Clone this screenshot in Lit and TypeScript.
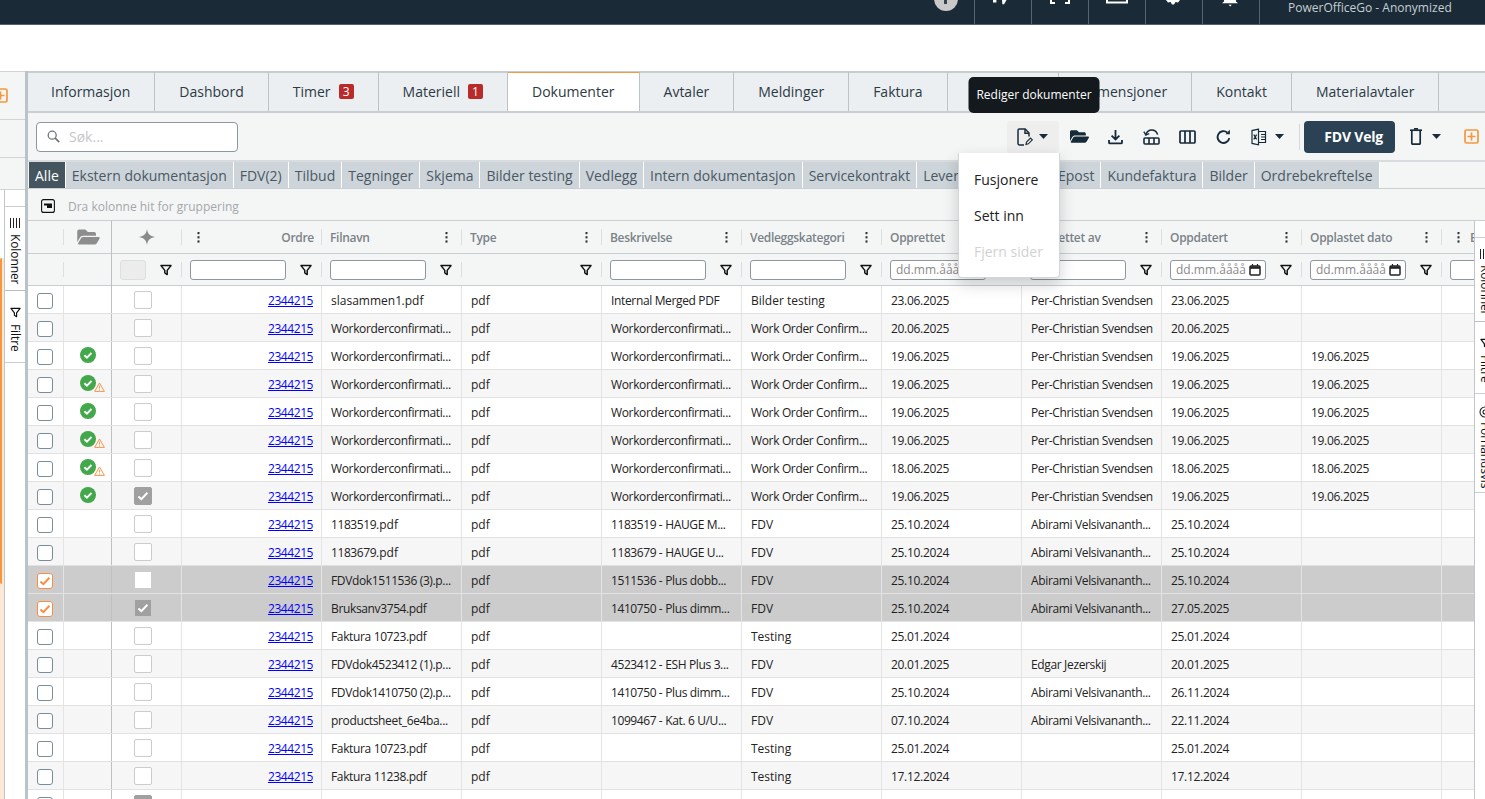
import { LitElement, html, css, svg, nothing } from "lit";
import { customElement } from "lit/decorators.js";
import { classMap } from "lit/directives/class-map.js";

const FOLDER = "M572.694 292.093L500.27 416.248A63.997 63.997 0 0 1 444.989 448H45.025c-18.523 0-30.064-20.093-20.731-36.093l72.424-124.155A64 64 0 0 1 152 256h399.964c18.523 0 30.064 20.093 20.73 36.093zM152 224h328v-48c0-26.51-21.49-48-48-48H272l-64-64H48C21.49 64 0 85.49 0 112v278.046l69.077-118.418C86.214 242.25 117.989 224 152 224z";

const funnel = html`<svg class="funnel" width="12" height="12" viewBox="0 0 12 12" fill="none" stroke="#111" stroke-width="1.5" stroke-linejoin="round"><path d="M1 1.6h10L7.2 6.4v4.2L4.8 9V6.4z"/></svg>`;
const dots = html`<svg class="dots" width="3" height="11" viewBox="0 0 3 11" fill="#333"><rect x=".5" y="0" width="2" height="2.2"/><rect x=".5" y="4.2" width="2" height="2.2"/><rect x=".5" y="8.4" width="2" height="2.2"/></svg>`;
const caret = html`<svg class="caret" width="9" height="5" viewBox="0 0 9 5" fill="#1b2c38"><path d="M0 0h9L4.500 5z"/></svg>`;
const plusBox = html`<svg width="15" height="15" viewBox="0 0 15 15" fill="none" stroke="#f7963e" stroke-width="1.700"><rect x="1" y="1" width="13" height="13" rx="1.500"/><path d="M7.500 3.500v8M3.500 7.500h8"/></svg>`;
const okIcon = html`<svg width="16" height="16" viewBox="0 0 16 16"><circle cx="8" cy="8" r="8" fill="#43a74b"/><path d="M4.400 8.200l2.500 2.400 4.600-4.600" fill="none" stroke="#fff" stroke-width="1.900"/></svg>`;
const warnIcon = html`<svg class="warn" width="11" height="10" viewBox="0 0 11 10" fill="none" stroke="#f7954a" stroke-width="1"><path d="M5.500 1L10.400 9.400H.6z" stroke-linejoin="round"/><path d="M5.500 3.600v3M5.500 7.500v1" stroke-width=".9"/></svg>`;
const tick = (c: string) => html`<svg width="12" height="10" viewBox="0 0 12 10" fill="none" stroke="${c}" stroke-width="2"><path d="M1.400 5.400l3 2.800 6-6.400"/></svg>`;
const calendar = html`<svg class="cal" width="12" height="12" viewBox="0 0 12 12" fill="none" stroke="#222" stroke-width="1.500"><rect x="1" y="2" width="10" height="9" rx="1"/><path d="M1 3.600h10" stroke-width="2.400"/><path d="M3.500 0v2M8.500 0v2" stroke-width="1.200"/></svg>`;

const topIcons = [
  svg`<path d="M1 0v2.600h3.400V0M10 0h4.500l-2.400 4.200H10.400z" fill="#fff"/>`,
  svg`<path d="M2 0v3h4M20 0v3h-4" fill="none" stroke="#fff" stroke-width="2"/>`,
  svg`<path d="M1 0v2.400h20V0" fill="none" stroke="#fff" stroke-width="2"/>`,
  svg`<path d="M3 0h14l-2 2.500-2.400-.4L11 4.400H9L7.600 2.100 5 2.500z" fill="#fff"/>`,
  svg`<path d="M4 0h12v1.600l2 1.600H2l2-1.600zM8.600 4.800h3.200L10.200 6.600z" fill="#fff"/>`,
];

const tabs = [
  { t: "Informasjon", cls: "first" }, { t: "Dashbord" }, { t: "Timer", b: "3" }, { t: "Materiell", b: "1" },
  { t: "Dokumenter", cls: "active" }, { t: "Avtaler" }, { t: "Meldinger" }, { t: "Faktura" },
  { t: "Delelister", cls: "covered" }, { t: "Dimensjoner" }, { t: "Kontakt" }, { t: "Materialavtaler" },
];

const cats = ["Alle", "Ekstern dokumentasjon", "FDV(2)", "Tilbud", "Tegninger", "Skjema", "Bilder testing", "Vedlegg", "Intern dokumentasjon", "Servicekontrakt", "Leverandørfaktura", "Epost", "Kundefaktura", "Bilder", "Ordrebekreftelse"];

const W = "Workorderconfirmati...";
const WO = "Work Order Confirm...";
const P = "Per-Christian Svendsen";
const A = "Abirami Velsivananth...";

type Row = { s?: string; c?: number; sel?: boolean; f: string; d: string; k: string; o: string; by: string; u: string; up: string };
const rows: Row[] = [
  { f: "slasammen1.pdf", d: "Internal Merged PDF", k: "Bilder testing", o: "23.06.2025", by: P, u: "23.06.2025", up: "" },
  { f: W, d: W, k: WO, o: "20.06.2025", by: P, u: "20.06.2025", up: "" },
  { s: "ok", f: W, d: W, k: WO, o: "19.06.2025", by: P, u: "19.06.2025", up: "19.06.2025" },
  { s: "warn", f: W, d: W, k: WO, o: "19.06.2025", by: P, u: "19.06.2025", up: "19.06.2025" },
  { s: "ok", f: W, d: W, k: WO, o: "19.06.2025", by: P, u: "19.06.2025", up: "19.06.2025" },
  { s: "warn", f: W, d: W, k: WO, o: "19.06.2025", by: P, u: "19.06.2025", up: "19.06.2025" },
  { s: "warn", f: W, d: W, k: WO, o: "18.06.2025", by: P, u: "18.06.2025", up: "18.06.2025" },
  { s: "ok", c: 1, f: W, d: W, k: WO, o: "19.06.2025", by: P, u: "19.06.2025", up: "19.06.2025" },
  { f: "1183519.pdf", d: "1183519 - HAUGE M...", k: "FDV", o: "25.10.2024", by: A, u: "25.10.2024", up: "" },
  { f: "1183679.pdf", d: "1183679 - HAUGE U...", k: "FDV", o: "25.10.2024", by: A, u: "25.10.2024", up: "" },
  { sel: true, f: "FDVdok1511536 (3).p...", d: "1511536 - Plus dobb...", k: "FDV", o: "25.10.2024", by: A, u: "25.10.2024", up: "" },
  { sel: true, c: 1, f: "Bruksanv3754.pdf", d: "1410750 - Plus dimm...", k: "FDV", o: "25.10.2024", by: A, u: "27.05.2025", up: "" },
  { f: "Faktura 10723.pdf", d: "", k: "Testing", o: "25.01.2024", by: "", u: "25.01.2024", up: "" },
  { f: "FDVdok4523412 (1).p...", d: "4523412 - ESH Plus 3...", k: "FDV", o: "20.01.2025", by: "Edgar Jezerskij", u: "20.01.2025", up: "" },
  { f: "FDVdok1410750 (2).p...", d: "1410750 - Plus dimm...", k: "FDV", o: "25.10.2024", by: A, u: "26.11.2024", up: "" },
  { f: "productsheet_6e4ba...", d: "1099467 - Kat. 6 U/U...", k: "FDV", o: "07.10.2024", by: A, u: "22.11.2024", up: "" },
  { f: "Faktura 10723.pdf", d: "", k: "Testing", o: "25.01.2024", by: "", u: "25.01.2024", up: "" },
  { f: "Faktura 11238.pdf", d: "", k: "Testing", o: "17.12.2024", by: "", u: "17.12.2024", up: "" },
  { c: 1, f: "", d: "", k: "", o: "", by: "", u: "", up: "" },
];

const heads = ["Filnavn", "Type", "Beskrivelse", "Vedleggskategori", "Opprettet", "Opprettet av", "Oppdatert", "Opplastet dato"];
const filters: ("text" | "date" | "none")[] = ["text", "none", "text", "text", "date", "text", "date", "date"];

/* Cell text: long strings and digit runs sit a little tighter, as in the reference's hinted text. */
const cellText = (s: string) => {
  if (!s) return nothing;
  const parts = s.split(/(\d+)/).map((p) => (/^\d+$/.test(p) ? html`<span class="num">${p}</span>` : p));
  return html`<span class=${s.length > 14 ? "tight" : ""}>${parts}</span>`;
};

@customElement("app-root")
export class AppRoot extends LitElement {
  static styles = css`
    :host { display: block; width: 1485px; height: 799px; overflow: hidden; background: #fff; font-family: "Open Sans", sans-serif; color: #222; }
    * { box-sizing: border-box; }
    svg { display: block; flex: none; }
    .top { height: 25px; background: #1a2b37; border-bottom: 1px solid #56646e; display: flex; justify-content: flex-end; overflow: hidden; }
    .tc { width: 57px; height: 24px; border-left: 1px solid #56646e; display: flex; justify-content: center; align-items: flex-start; }
    .tc.first { border-left: 0; }
    .circle { width: 24px; height: 24px; border-radius: 50%; background: #c9c9c9; margin-top: -13px; display: flex; justify-content: center; flex: none; }
    .circle i { width: 3px; height: 4px; margin-top: 13px; background: #33414b; }
    .user { width: 226px; height: 24px; border-left: 1px solid #56646e; padding-left: 28px; font-size: 12px; line-height: 15px; color: #c5ced3; white-space: nowrap; }
    .band { height: 46px; }
    .body { display: flex; height: 728px; }
    .strip { width: 25px; flex: none; display: flex; flex-direction: column; overflow: hidden; }
    .sb { background: #f4f6f6; border-top: 1px solid #cfd4d7; flex: none; height: 38px; }
    .sb.a { height: 48px; display: flex; align-items: center; }
    .sb.a svg { margin-left: -7px; }
    .sb.c { height: 33px; border-bottom: 1px solid #cfd4d7; }
    .lower { flex: 1; display: flex; min-height: 0; }
    .peach { width: 4px; flex: none; background: #fde8d5; margin-top: 68px; display: flex; }
    .peach i { width: 2px; height: 326px; background: #f7963e; border-radius: 2px 0 0 2px; }
    .side { width: 21px; flex: none; border-left: 1px solid #bfc5c9; background: #fff; padding-top: 16px; display: flex; flex-direction: column; }
    .st { border-top: 1px solid #c9ced2; display: flex; flex-direction: column; align-items: center; padding-top: 11px; width: 20px; gap: 6px; font-size: 12px; color: #111; white-space: nowrap; }
    .st span { writing-mode: vertical-rl; line-height: 14px; letter-spacing: -0.1px; }
    .st.k { height: 85px; border-bottom: 1px solid #b9bfc3; }
    .st.f { height: 72px; padding-top: 16px; border-top: 0; border-bottom: 1px solid #c9ced2; }
    .st.v { height: 99px; padding-top: 12px; border-top: 0; border-bottom: 1px solid #c9ced2; gap: 4px; }
    .main { width: 1460px; flex: none; border-left: 3px solid #bcc3c8; display: flex; flex-direction: column; min-height: 0; }
    .tabs { height: 42px; flex: none; display: flex; background: #ebeff2; border-top: 2px solid #c8cdd0; border-bottom: 2px solid #c8ced2; }
    .tab { display: flex; align-items: center; gap: 8px; padding: 0 24px; border-right: 1px solid #bcc3c8; font-size: 14px; color: #2b3a45; white-space: nowrap; margin-top: -1px; }
    .tab.first { padding-left: 23px; }
    .tab.covered { padding-right: 25px; }
    .tab.active { background: #fff; border-top: 1px solid #f79a3e; padding-bottom: 1px; }
    .badge { width: 15px; height: 15px; background: #b92b2b; border-radius: 2px; color: #fff; font-size: 12px; line-height: 15px; text-align: center; }
    .toolbar { height: 47px; flex: none; background: #f4f6f6; display: flex; align-items: center; padding-left: 8px; }
    .search { width: 202px; height: 30px; background: #fff; border: 1px solid #8d979d; border-radius: 4px; display: flex; align-items: center; padding-left: 10px; gap: 9px; font-size: 14px; color: #c6c6c6; }
    .tools { margin-left: auto; display: flex; align-items: center; height: 32px; }
    .edit { position: relative; width: 52px; height: 32px; margin-right: 2px; background: #eee; border-radius: 3px; display: flex; align-items: center; padding-left: 10px; gap: 6px; }
    .ib { width: 36px; height: 32px; display: flex; align-items: center; justify-content: center; flex: none; }
    .ib.xl { width: 56px; padding-right: 4px; gap: 8px; }
    .sep { width: 1px; height: 26px; background: #d5d9db; margin: 0 4px 0 2px; }
    .fdv { width: 91px; height: 32px; background: #2a4254; color: #fff; border-radius: 4px; font-size: 14px; font-weight: 700; display: flex; align-items: center; justify-content: flex-end; padding-right: 12px; letter-spacing: -0.2px; }
    .ib.tr { width: 58px; gap: 10px; padding-left: 2px; }
    .ib.pl { width: 32px; padding-left: 4px; }
    .tooltip { position: absolute; left: 50%; bottom: calc(100% + 8px); transform: translateX(-50%); margin-left: 1px; width: 131px; height: 36px; border-radius: 5px; background: #14191e; color: #fff; font-size: 12px; font-weight: 500; display: flex; align-items: center; justify-content: center; white-space: nowrap; z-index: 5; }
    .menu { position: absolute; top: 32px; right: -1px; width: 102px; height: 125px; background: #fff; border: 1px solid #d2d6d9; border-top: 0; border-radius: 0 0 4px 4px; box-shadow: 0 6px 16px rgba(0,0,0,.18); padding-top: 9px; z-index: 4; font-size: 14px; color: #222; }
    .menu div { height: 36px; display: flex; align-items: center; padding-left: 15px; }
    .menu .off { color: #d2d2d2; }
    .cats { height: 29px; flex: none; display: flex; background: #f4f6f6; border-top: 2px solid #d8dcdf; border-bottom: 1px solid #c8ced2; padding-left: 1px; }
    .cat { background: #cdd4da; color: #4a5964; font-size: 14px; line-height: 27px; height: 26px; padding: 0 6px; border-right: 1px solid #fff; white-space: nowrap; }
    .cat.on { background: #44555f; color: #fff; }
    .group { height: 32px; flex: none; background: #f4f6f6; border-bottom: 1px solid #c8ced2; display: flex; align-items: center; padding: 3px 0 0 13px; gap: 13px; font-size: 12px; color: #a3a7aa; }
    .gridwrap { flex: 1; min-height: 0; display: flex; }
    .table { width: 1446px; flex: none; overflow: hidden; }
    .right { width: 11px; flex: none; overflow: hidden; }
    .right .side { height: 100%; }
    .r { display: grid; grid-template-columns: 36px 48px 70px repeat(10, 140px); width: max-content; background: #fff; }
    .hr { height: 33px; background: #f4f6f6; border-bottom: 1px solid #c8ced2; }
    .fr { height: 32px; background: #f4f6f6; border-bottom: 1px solid #c8ced2; }
    .c { position: relative; display: flex; align-items: center; min-width: 0; }
    .hr .c, .fr .c { padding: 0 8px; }
    .hr .c::after, .fr .c::after { content: ""; position: absolute; right: 0; top: 8px; bottom: 8px; width: 1px; background: #dcdfe1; }
    .hr .fz, .fr .fz, .hr .mid { justify-content: center; }
    .hr .fz::after, .fr .fz::after { top: 0; bottom: -1px; background: #bcc1c4; }
    .hl { font-size: 12px; font-weight: 600; color: #7b8389; white-space: nowrap; flex: 1; letter-spacing: -0.3px; }
    .hc { justify-content: space-between; padding-right: 14px !important; }
    .hord { padding-left: 15px !important; }
    .hord .hl { text-align: right; }
    .hlast { padding-left: 15px !important; gap: 10px; }
    .ti { width: 96px; height: 20px; background: #fff; border: 1px solid #8d979d; border-radius: 3px; flex: none; }
    .ti.date { display: flex; align-items: center; justify-content: space-between; padding: 0 4px 0 5px; font-size: 12px; color: #8a8a8a; white-space: nowrap; }
    .fc { justify-content: space-between; padding-right: 10px !important; }
    .fend { justify-content: flex-end; }
    .dis { width: 26px; height: 20px; background: #ececec; border: 1px solid #dedede; border-radius: 3px; }
    .dr { height: 28px; border-bottom: 1px solid #e1e1e1; font-size: 12px; }
    .dr.alt { background: #f6f6f6; }
    .dr.sel { background: #ccc; border-bottom-color: #e3e3e3; }
    .dr .c { border-right: 1px solid #e4e4e4; padding: 1px 8px 0 9px; white-space: nowrap; overflow: hidden; }
    .dr .c.fz { border-right-color: #bcc1c4; padding: 1px 0 0; justify-content: center; }
    .dr .c.ctr { padding: 1px 0 0; justify-content: center; }
    .dr .c.ln { justify-content: flex-end; }
    .lnk { color: #00f; text-decoration: underline; letter-spacing: -0.43px; margin-right: 0; }
    .num { letter-spacing: -0.42px; }
    .tight { letter-spacing: -0.35px; }
    .tight .num { letter-spacing: -0.42px; }
    .cb { width: 16px; height: 16px; background: #fff; border: 1px solid #7c8c99; border-radius: 3px; display: flex; align-items: center; justify-content: center; margin: 2px 0 0 -2px; }
    .cb.on { border-color: #f88d46; }
    .b2 { width: 18px; height: 18px; background: #fff; border: 1px solid #ccc; border-radius: 2px; display: flex; align-items: center; justify-content: center; margin: -1px 0 0 -8px; }
    .b2.on { background: #a0a0a0; border-color: #a0a0a0; }
    .dr.sel .b2 { width: 16px; height: 16px; border: 0; border-radius: 0; }
    .warn { margin: 7px 0 0 -2px; }
    .st3 { display: flex; padding-left: 16px; margin-top: -2px; width: 100%; }
  `;

  private side(third: boolean) {
    return html`<div class="side">
      <div class="st k">
        <svg width="11" height="10" viewBox="0 0 11 10" fill="none" stroke="#222"><path d="M.5 0v10M3.500 0v10M6.500 0v10M9.500 0v10"/></svg>
        <span>Kolonner</span>
      </div>
      <div class="st f">
        <svg width="11" height="11" viewBox="0 0 12 12" fill="none" stroke="#111" stroke-width="1.300" stroke-linejoin="round"><path d="M1 1.600h10L7.200 6.400v4.200L4.800 9V6.400z"/></svg>
        <span>Filtre</span>
      </div>
      ${third ? html`<div class="st v">
        <svg width="12" height="12" viewBox="0 0 12 12" fill="none" stroke="#222" stroke-width="1.100"><circle cx="6" cy="6" r="5"/><circle cx="6" cy="6" r="2"/></svg>
        <span>Forhåndsvis</span>
      </div>` : nothing}
    </div>`;
  }

  private toolbar() {
    return html`<div class="toolbar">
      <div class="search">
        <svg width="13" height="13" viewBox="0 0 13 13" fill="none" stroke="#6f777c" stroke-width="1.300"><circle cx="5.200" cy="5.200" r="4"/><path d="M8.200 8.200l4 4" stroke-width="1.800"/></svg>
        <span>Søk...</span>
      </div>
      <div class="tools">
        <div class="edit">
          <svg width="16" height="18" viewBox="0 0 16 18" fill="none" stroke="#1b2c38" stroke-width="1.500"><path d="M7 17H2.400A1.400 1.400 0 0 1 1 15.600V2.400A1.400 1.400 0 0 1 2.400 1h5.800L12 5v3.400"/><path d="M8 1v4.200h4"/><path d="M9 16.400l.5-2.400 4-4 1.800 1.800-4 4z" stroke-width="1.100"/></svg>
          ${caret}
          <div class="tooltip">Rediger dokumenter</div>
          <div class="menu"><div>Fusjonere</div><div>Sett inn</div><div class="off">Fjern sider</div></div>
        </div>
        <div class="ib"><svg width="19" height="17" viewBox="0 0 576 512" fill="#162a38"><path d="${FOLDER}"/></svg></div>
        <div class="ib"><svg width="15" height="16" viewBox="0 0 15 16" fill="none" stroke="#162a38" stroke-width="1.800"><path d="M7.500 1v9M3.600 6.600l3.900 3.900 3.900-3.900"/><path d="M1 11v2.400c0 .6.400 1 1 1h11c.6 0 1-.4 1-1V11"/></svg></div>
        <div class="ib"><svg width="17" height="16" viewBox="0 0 17 16" fill="none" stroke="#162a38" stroke-width="1.600"><path d="M2.800 6.500V5.600C4 2.600 6.200 1 8.600 1c2.800 0 5.200 1.800 6 4.600"/><path d="M.8 2.600l2 3.400 3.400-1.400" stroke-width="1.300"/><rect x="1" y="9" width="15" height="6" rx="1"/><path d="M6 9v6M11 9v6"/></svg></div>
        <div class="ib"><svg width="17" height="14" viewBox="0 0 17 14" fill="none" stroke="#162a38" stroke-width="1.700"><rect x="1" y="1" width="15" height="12" rx="1"/><path d="M6 1v12M11 1v12"/></svg></div>
        <div class="ib"><svg width="15" height="16" viewBox="0 0 14 15" fill="none" stroke="#162a38" stroke-width="1.800"><path d="M12.400 8.500A5.500 5.500 0 1 1 10.500 3.300"/><path d="M13 .8V5H8.800z" fill="#162a38" stroke="none"/></svg></div>
        <div class="ib xl"><svg width="16" height="18" viewBox="0 0 16 18" fill="none" stroke="#162a38" stroke-width="1.200"><path d="M7.500 1.200L1 2.600v12.800l6.500 1.400zM7.500 3.500h7v11h-7"/><path d="M2.800 6.600l2.800 4.800M5.600 6.600l-2.800 4.800M10 6.500h4M10 9h4M10 11.500h4"/></svg>${caret}</div>
        <div class="sep"></div>
        <div class="fdv">FDV Velg</div>
        <div class="ib tr"><svg width="12" height="17" viewBox="0 0 12 17" fill="none" stroke="#162a38" stroke-width="1.700"><path d="M0 2.200h12" /><path d="M1.800 2.500v12.700c0 .6.400 1 1 1h6.400c.6 0 1-.4 1-1V2.500"/><path d="M4 .8h4"/></svg>${caret}</div>
        <div class="ib pl">${plusBox}</div>
      </div>
    </div>`;
  }

  private headRows() {
    return html`
      <div class="r hr">
        <div class="c"></div>
        <div class="c fz"><svg width="23" height="20" viewBox="0 0 576 512" fill="#8d8d8d"><path d="${FOLDER}"/></svg></div>
        <div class="c mid"><svg width="16" height="16" viewBox="0 0 16 16" fill="#8a8a8a"><path d="M8 0c.6 4.600 2.600 7 8 8-5.400 1-7.400 3.400-8 8-.6-4.600-2.600-7-8-8 5.400-1 7.400-3.400 8-8z"/></svg></div>
        <div class="c hord">${dots}<span class="hl">Ordre</span></div>
        ${heads.map((h) => html`<div class="c hc"><span class="hl">${h}</span>${dots}</div>`)}
        <div class="c hlast">${dots}<span class="hl">Endret</span></div>
      </div>
      <div class="r fr">
        <div class="c"></div>
        <div class="c fz"></div>
        <div class="c fc"><div class="dis"></div>${funnel}</div>
        <div class="c fc"><div class="ti"></div>${funnel}</div>
        ${filters.map((f) => html`<div class="c fc ${f === "none" ? "fend" : ""}">
          ${f === "text" ? html`<div class="ti"></div>` : nothing}
          ${f === "date" ? html`<div class="ti date"><span>dd.mm.åååå</span>${calendar}</div>` : nothing}
          ${funnel}
        </div>`)}
        <div class="c fc"><div class="ti"></div></div>
      </div>`;
  }

  private row(r: Row, i: number) {
    const cls = { dr: true, r: true, sel: !!r.sel, alt: i % 2 === 1 };
    return html`<div class=${classMap(cls)}>
      <div class="c ctr"><div class="cb ${r.sel ? "on" : ""}">${r.sel ? tick("#f88d46") : nothing}</div></div>
      <div class="c fz">
        <div class="st3">${r.s ? okIcon : nothing}${r.s === "warn" ? warnIcon : nothing}</div>
      </div>
      <div class="c ctr"><div class="b2 ${r.c ? "on" : ""}">${r.c ? tick("#fff") : nothing}</div></div>
      <div class="c ln">${r.f ? html`<span class="lnk">2344215</span>` : nothing}</div>
      <div class="c">${cellText(r.f)}</div>
      <div class="c">${r.f ? "pdf" : ""}</div>
      <div class="c">${cellText(r.d)}</div>
      <div class="c">${cellText(r.k)}</div>
      <div class="c">${cellText(r.o)}</div>
      <div class="c">${cellText(r.by)}</div>
      <div class="c">${cellText(r.u)}</div>
      <div class="c">${cellText(r.up)}</div>
      <div class="c"></div>
    </div>`;
  }

  render() {
    return html`
      <div class="top">
        <div class="tc first"><div class="circle"><i></i></div></div>
        ${topIcons.map((p) => html`<div class="tc"><svg width="22" height="8" viewBox="0 0 22 8">${p}</svg></div>`)}
        <div class="user">PowerOfficeGo - Anonymized</div>
      </div>
      <div class="band"></div>
      <div class="body">
        <div class="strip">
          <div class="sb a">${plusBox}</div>
          <div class="sb"></div>
          <div class="sb c"></div>
          <div class="lower">
            <div class="peach"><i></i></div>
            ${this.side(false)}
          </div>
        </div>
        <div class="main">
          <div class="tabs">
            ${tabs.map((t) => html`<div class="tab ${t.cls ?? ""}">${t.t}${t.b ? html`<span class="badge">${t.b}</span>` : nothing}</div>`)}
          </div>
          ${this.toolbar()}
          <div class="cats">
            ${cats.map((c, i) => html`<div class="cat ${i === 0 ? "on" : ""}">${c}</div>`)}
          </div>
          <div class="group">
            <svg width="14" height="14" viewBox="0 0 14 14" fill="none" stroke="#111" stroke-width="1.100"><rect x=".6" y=".6" width="12.800" height="12.800" rx="2"/><path d="M3 4.500h8v4.500H6V6.500H3z" fill="#111" stroke="none"/></svg>
            <span>Dra kolonne hit for gruppering</span>
          </div>
          <div class="gridwrap">
            <div class="table">
              ${this.headRows()}
              ${rows.map((r, i) => this.row(r, i))}
            </div>
            <div class="right">${this.side(true)}</div>
          </div>
        </div>
      </div>
    `;
  }
}
